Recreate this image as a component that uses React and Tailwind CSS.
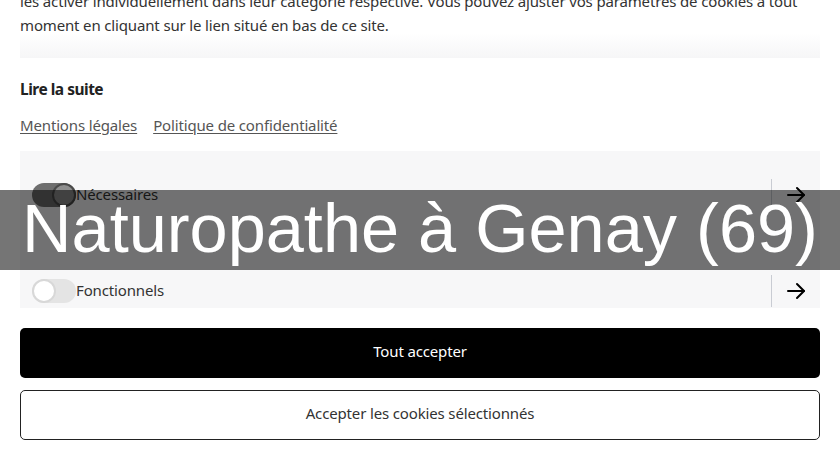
import React from "react";

function Arrow() {
  return (
    <svg width="20" height="20" viewBox="0 0 20 20" fill="none" stroke="#000" strokeWidth="2" strokeLinecap="round" strokeLinejoin="round">
      <path d="M2 10h16" />
      <path d="M11 3l7 7-7 7" />
    </svg>
  );
}

function Row({ label, checked }) {
  return (
    <div className="flex h-[32px] items-center pl-[12px] pr-[14px]">
      {checked ? (
        <div className="relative h-[24px] w-[44px] shrink-0 rounded-full bg-[#6e6e6e]">
          <div className="absolute right-0 top-0 h-[24px] w-[24px] rounded-full border-2 border-[#4a4a4a] bg-[#8e8e8e]" />
        </div>
      ) : (
        <div className="relative h-[24px] w-[44px] shrink-0 rounded-full bg-[#e4e4e4]">
          <div className="absolute left-0 top-0 h-[24px] w-[24px] rounded-full border-2 border-[#d8d8d8] bg-white" />
        </div>
      )}
      <span className="pb-[3px] text-[15px] leading-6 tracking-[-0.15px] text-[#333]">{label}</span>
      <div className="flex-1" />
      <div className="h-[32px] w-px bg-[#c9ccd3]" />
      <div className="ml-[14px] flex h-[20px] w-[20px] items-center justify-center">
        <Arrow />
      </div>
    </div>
  );
}

export default function App() {
  return (
    <div
      className="relative h-[460px] w-[840px] overflow-hidden bg-white px-[20px]"
      style={{ fontFamily: '"Noto Sans", "Open Sans", sans-serif' }}
    >
      <p className="-mt-[11px] whitespace-nowrap text-[15px] leading-6 tracking-[-0.15px] text-[#333]">
        les activer individuellement dans leur catégorie respective. Vous pouvez ajuster vos paramètres de cookies à tout
        <br />
        moment en cliquant sur le lien situé en bas de ce site.
      </p>
      <div className="-mt-[4px] h-[25px] bg-gradient-to-b from-white to-[#f6f6f7]" />
      <div className="mt-[19px] text-[15.5px] font-bold leading-6 tracking-[-0.5px] text-[#222]">Lire la suite</div>
      <div className="mt-[12px] flex gap-[16px] text-[15px] leading-6 tracking-[-0.15px] text-[#555]">
        <span className="underline underline-offset-2">Mentions légales</span>
        <span className="underline underline-offset-2">Politique de confidentialité</span>
      </div>
      <div className="mt-[14px] flex flex-col gap-[64px] bg-[#f7f7f8] pb-px pt-[28px]">
        <Row label="Nécessaires" checked />
        <Row label="Fonctionnels" />
      </div>
      <button className="mt-[20px] flex h-[50px] w-full items-center justify-center rounded-[5px] bg-black pb-[3px] text-[15px] tracking-[-0.15px] text-white">
        Tout accepter
      </button>
      <button className="mt-[12px] flex h-[50px] w-full items-center justify-center rounded-[5px] border border-[#222] bg-white pb-[3px] text-[15px] tracking-[-0.15px] text-[#333]">
        Accepter les cookies sélectionnés
      </button>

      <div className="absolute left-0 top-[190px] flex h-[80px] w-full items-center justify-center bg-black/[0.54] pb-[4px]">
        <span
          className="whitespace-nowrap text-[68.5px] text-white"
          style={{ fontFamily: '"Liberation Sans", Arial, sans-serif', lineHeight: "normal" }}
        >
          Naturopathe à Genay (69)
        </span>
      </div>
    </div>
  );
}
